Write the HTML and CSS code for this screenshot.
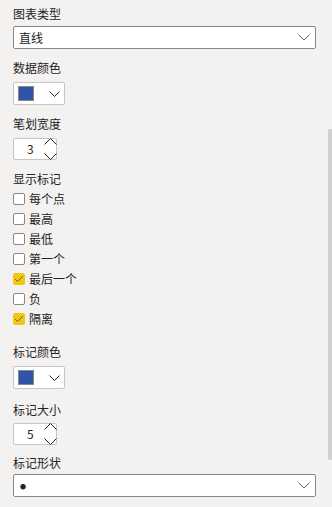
FILE: index.html
```html
<!DOCTYPE html>
<html lang="zh">
<head>
<meta charset="utf-8">
<link rel="stylesheet" href="styles.css">
</head>
<body>
<div class="pane">
  <div class="label first">图表类型</div>
  <div class="select">
    <span class="select-text">直线</span>
    <svg class="chev" width="12" height="7" viewBox="0 0 12 7"><path d="M0.5 0.5 L6 6 L11.5 0.5" fill="none" stroke="#605e5c" stroke-width="1"/></svg>
  </div>

  <div class="label">数据颜色</div>
  <div class="colorpick">
    <span class="swatch"></span>
    <svg class="chev-s" width="11" height="6" viewBox="0 0 11 6"><path d="M0.5 0.5 L5.5 5.5 L10.5 0.5" fill="none" stroke="#252423" stroke-width="1"/></svg>
  </div>

  <div class="label">笔划宽度</div>
  <div class="spin">
    <span class="spin-val">3</span>
    <svg class="spin-up" width="13" height="7" viewBox="0 0 13 7"><path d="M0.5 6.5 L6.5 0.5 L12.5 6.5" fill="none" stroke="#252423" stroke-width="1"/></svg>
    <svg class="spin-down" width="13" height="7" viewBox="0 0 13 7"><path d="M0.5 0.5 L6.5 6.5 L12.5 0.5" fill="none" stroke="#252423" stroke-width="1"/></svg>
  </div>

  <div class="label">显示标记</div>
  <ul class="checks">
    <li><span class="box"></span>每个点</li>
    <li><span class="box"></span>最高</li>
    <li><span class="box"></span>最低</li>
    <li><span class="box"></span>第一个</li>
    <li><span class="box on"><svg width="10" height="8" viewBox="0 0 10 8"><path d="M1 4 L3.6 6.5 L9 1" fill="none" stroke="#6b6340" stroke-width="1"/></svg></span>最后一个</li>
    <li><span class="box"></span>负</li>
    <li><span class="box on"><svg width="10" height="8" viewBox="0 0 10 8"><path d="M1 4 L3.6 6.5 L9 1" fill="none" stroke="#6b6340" stroke-width="1"/></svg></span>隔离</li>
  </ul>

  <div class="label gap-lg">标记颜色</div>
  <div class="colorpick">
    <span class="swatch"></span>
    <svg class="chev-s" width="11" height="6" viewBox="0 0 11 6"><path d="M0.5 0.5 L5.5 5.5 L10.5 0.5" fill="none" stroke="#252423" stroke-width="1"/></svg>
  </div>

  <div class="label size">标记大小</div>
  <div class="spin">
    <span class="spin-val">5</span>
    <svg class="spin-up" width="13" height="7" viewBox="0 0 13 7"><path d="M0.5 6.5 L6.5 0.5 L12.5 6.5" fill="none" stroke="#252423" stroke-width="1"/></svg>
    <svg class="spin-down" width="13" height="7" viewBox="0 0 13 7"><path d="M0.5 0.5 L6.5 6.5 L12.5 0.5" fill="none" stroke="#252423" stroke-width="1"/></svg>
  </div>

  <div class="label shape">标记形状</div>
  <div class="select">
    <span class="select-text dot">●</span>
    <svg class="chev" width="12" height="7" viewBox="0 0 12 7"><path d="M0.5 0.5 L6 6 L11.5 0.5" fill="none" stroke="#605e5c" stroke-width="1"/></svg>
  </div>
</div>
<div class="scrollbar"></div>
</body>
</html>
```

FILE: styles.css
```css
html, body {
  margin: 0;
  padding: 0;
  background: #f3f2f1;
  width: 332px;
  height: 507px;
  overflow: hidden;
}
body {
  font-family: "Noto Sans CJK SC", "Noto Sans", sans-serif;
  font-size: 12px;
  color: #252423;
  position: relative;
}
.pane {
  padding: 0 16px 0 13px;
}
.label {
  height: 16px;
  line-height: 16px;
  margin-top: 11px;
  margin-bottom: 6px;
}
.label.first {
  margin-top: 6px;
  margin-bottom: 4px;
}
.label.gap-lg {
  margin-top: 15px;
}
.label.size {
  margin-top: 13px;
  margin-bottom: 5px;
}
.label.shape {
  margin-top: 10px;
  margin-bottom: 3px;
}
.select {
  box-sizing: border-box;
  height: 23px;
  width: 303px;
  background: #fff;
  border: 1px solid #8a8886;
  border-radius: 2px;
  display: flex;
  align-items: center;
  justify-content: space-between;
  padding: 0 5px 0 5px;
}
.select-text {
  line-height: 16px;
}
.select-text.dot {
  font-size: 6px;
  padding-left: 1px;
  padding-top: 2px;
}
.chev {
  display: block;
  margin-right: 0;
}
.colorpick {
  box-sizing: border-box;
  width: 52px;
  height: 23px;
  background: #fff;
  border: 1px solid #c8c6c4;
  border-radius: 2px;
  display: flex;
  align-items: center;
  padding-left: 4px;
}
.swatch {
  box-sizing: border-box;
  width: 16px;
  height: 15px;
  background: #2f55a6;
  border: 1px solid #8a8886;
}
.chev-s {
  display: block;
  margin-left: 15px;
}
.spin {
  position: relative;
  box-sizing: border-box;
  width: 44px;
  height: 22px;
  background: #fff;
  border: 1px solid #c8c6c4;
  border-radius: 2px;
}
.spin-val {
  position: absolute;
  left: 13px;
  top: 2px;
  line-height: 16px;
}
.spin-up {
  position: absolute;
  right: -1px;
  top: -1px;
  display: block;
}
.spin-down {
  position: absolute;
  right: -1px;
  bottom: -1px;
  display: block;
}
.checks {
  list-style: none;
  margin: 0;
  padding: 0;
  margin-top: -4px;
}
.checks li {
  display: flex;
  align-items: center;
  height: 20px;
  line-height: 16px;
}
.box {
  box-sizing: border-box;
  width: 12px;
  height: 12px;
  border: 1px solid #8a8886;
  border-radius: 2px;
  background: #fff;
  margin-right: 4px;
  display: flex;
  align-items: center;
  justify-content: center;
}
.box.on {
  background: #f2c811;
  border-color: #f2c811;
}
.box svg {
  display: block;
}
.scrollbar {
  position: absolute;
  right: 0;
  top: 129px;
  width: 4px;
  height: 331px;
  background: #d2d0ce;
  border-radius: 2px 0 0 2px;
}
```
